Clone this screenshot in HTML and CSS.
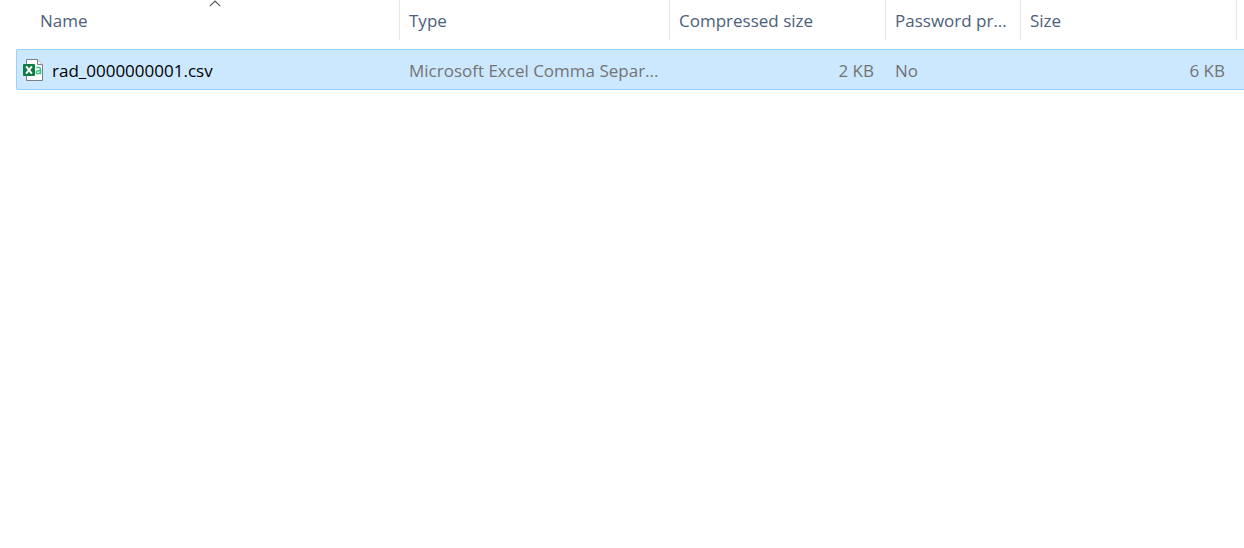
FILE: index.html
```html
<!DOCTYPE html>
<html lang="en">
<head>
<meta charset="utf-8">
<title>Compressed folder</title>
<link rel="stylesheet" href="styles.css">
</head>
<body>
<main class="file-list">
  <table class="details">
    <colgroup>
      <col class="col-name">
      <col class="col-type">
      <col class="col-packed">
      <col class="col-password">
      <col class="col-size">
      <col>
    </colgroup>
    <thead>
      <tr>
        <th scope="col" aria-sort="ascending">
          <button class="heading heading-name" type="button">Name
            <svg class="sort" width="12" height="7" viewBox="0 0 12 7" aria-hidden="true"><path d="M.8 6.200 6 1l5.200 5.200" fill="none" stroke="#555" stroke-width="1.200"/></svg>
          </button>
        </th>
        <th scope="col"><button class="heading" type="button">Type</button></th>
        <th scope="col"><button class="heading" type="button">Compressed size</button></th>
        <th scope="col"><button class="heading" type="button">Password pr...</button></th>
        <th scope="col"><button class="heading" type="button">Size</button></th>
        <td></td>
      </tr>
    </thead>
    <tbody>
      <tr class="row">
        <td class="cell">
          <div class="file">
            <svg class="file-icon" width="20" height="22" viewBox="0 0 20 22" aria-hidden="true">
              <path d="M3.500.5H14.500l5 5v16h-16z" fill="#fff" stroke="#7b7f83"/>
              <path d="M14.500.5v5h5" fill="#f4f4f4" stroke="#7b7f83"/>
              <rect y="5" width="12" height="12" rx="1" fill="#107c41"/>
              <path d="M3.100 7.300l5.800 7.400M8.900 7.300l-5.800 7.400" stroke="#fff" stroke-width="2" fill="none"/>
              <path d="M13.400 8.900q4.100-1.700 4.100 2v4.400M17.500 11.400c-2.600 0-4.200.4-4.200 1.900 0 2.200 4.200 1.600 4.200-.8" stroke="#33c481" stroke-width="1.500" fill="none"/>
            </svg>
            <span class="file-name">rad_0000000001.csv</span>
          </div>
        </td>
        <td class="cell muted">Microsoft Excel Comma Separ...</td>
        <td class="cell muted number">2 KB</td>
        <td class="cell muted">No</td>
        <td class="cell muted number">6 KB</td>
        <td class="cell"></td>
      </tr>
    </tbody>
  </table>
</main>
</body>
</html>
```
FILE: styles.css
```css
body {
  margin: 0;
  background: #fff;
  color: #000;
  font: 17px/24px "Open Sans", "Noto Sans", sans-serif;
}

.file-list {
  padding-left: 16px;
}

.details {
  width: 100%;
  table-layout: fixed;
  border-collapse: separate;
  border-spacing: 0;
}

.col-name { width: 384px; }
.col-type { width: 270px; }
.col-packed { width: 216px; }
.col-password { width: 135px; }
.col-size { width: 216px; }

th {
  padding: 0 0 9px;
  font-weight: 400;
}

.heading {
  display: block;
  box-sizing: border-box;
  width: 100%;
  height: 40px;
  padding: 2px 9px 0;
  border: 0;
  border-right: 1px solid #e5e5e5;
  background: none;
  color: #4c607a;
  font: inherit;
  text-align: left;
  white-space: nowrap;
}

.heading-name {
  position: relative;
  width: auto;
  min-width: calc(100% - 15px);
  margin-left: 15px;
}

.sort {
  position: absolute;
  top: 0;
  left: 50%;
  transform: translateX(-50%);
}

.cell {
  height: 39px;
  padding: 0 9px;
  border: solid #99d1ff;
  border-width: 1px 0;
  background: #cce8ff;
  white-space: nowrap;
}

.cell:first-child {
  padding-left: 6px;
  border-left-width: 1px;
  border-radius: 2px 0 0 2px;
}

.cell:last-child {
  padding: 0;
}

.muted {
  height: 36px;
  padding-top: 3px;
  color: #737373;
}

.number {
  padding-right: 12px;
  text-align: right;
}

.file {
  display: flex;
  align-items: center;
  gap: 9px;
}

.file-name {
  padding-top: 3px;
}
```
